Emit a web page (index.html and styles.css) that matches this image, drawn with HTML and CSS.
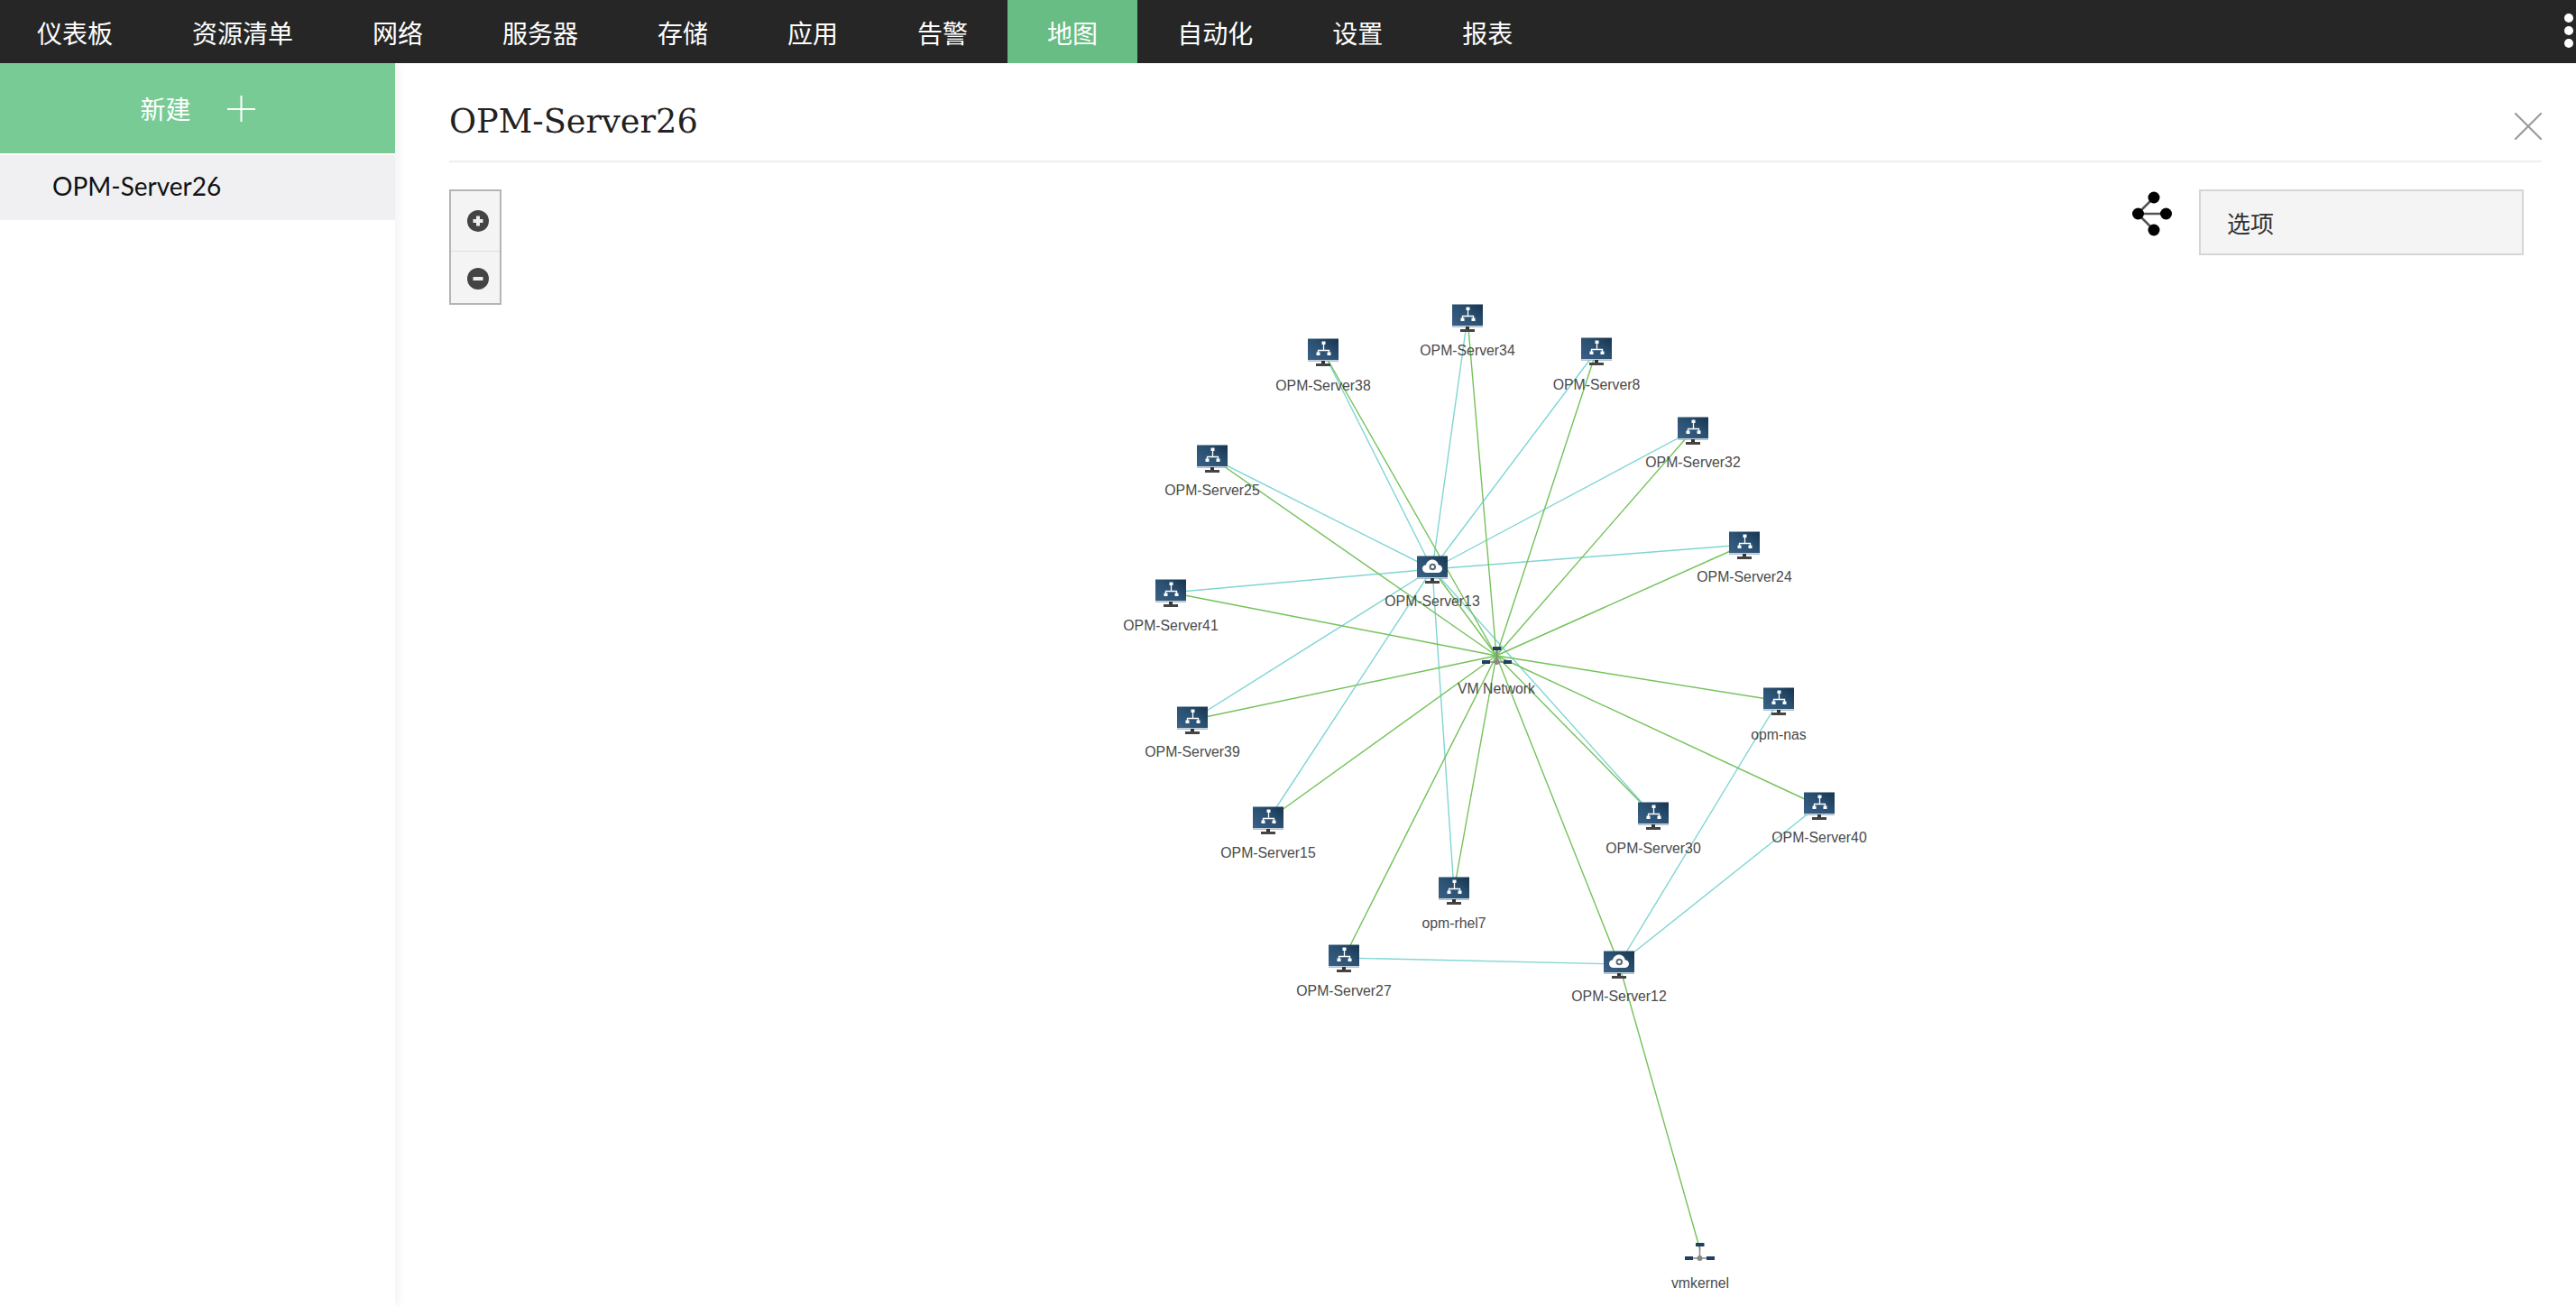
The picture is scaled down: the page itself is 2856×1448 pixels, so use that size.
FILE: index.html
```html
<!DOCTYPE html>
<html lang="zh">
<head>
<meta charset="utf-8">
<title>地图</title>
<link rel="stylesheet" href="styles.css">
</head>
<body>
<header class="topbar">
  <nav class="nav">
    <a class="nav-item">仪表板</a>
    <a class="nav-item">资源清单</a>
    <a class="nav-item">网络</a>
    <a class="nav-item">服务器</a>
    <a class="nav-item">存储</a>
    <a class="nav-item">应用</a>
    <a class="nav-item">告警</a>
    <a class="nav-item active">地图</a>
    <a class="nav-item">自动化</a>
    <a class="nav-item">设置</a>
    <a class="nav-item">报表</a>
  </nav>
  <div class="more"><i></i><i></i><i></i></div>
</header>
<div class="layout">
  <aside class="sidebar">
    <div class="new-btn">
      <span>新建</span>
      <svg class="plus" viewBox="0 0 31 29"><path d="M0 15h31M15.500 0v29"/></svg>
    </div>
    <div class="side-item">OPM-Server26</div>
  </aside>
  <main class="main">
    <svg class="map" viewBox="438 70 2418 1378" aria-label="map">
      <defs>
        <linearGradient id="scr" x1="0" y1="1" x2="1" y2="0">
          <stop offset="0" stop-color="#3a6288"/>
          <stop offset="0.550" stop-color="#2a5071"/>
          <stop offset="1" stop-color="#16344f"/>
        </linearGradient>
        <g id="monitor">
          <rect width="34" height="25" y="0.500" fill="url(#scr)"/>
          <rect width="34" height="1.500" y="24" fill="#c9d3dc"/>
          <rect x="15" y="25" width="4" height="3.500" fill="#333"/>
          <rect x="9" y="28" width="16" height="3" fill="#444"/>
        </g>
        <g id="srv">
          <use href="#monitor"/>
          <path d="M17.500 6v7.500M11.500 16v-2.500h12V16" fill="none" stroke="#fff" stroke-width="1.300"/>
          <rect x="15.500" y="3.500" width="4" height="3.500" fill="#fff"/>
          <rect x="9.500" y="15.500" width="4" height="3.500" fill="#fff"/>
          <rect x="21.500" y="15.500" width="4" height="3.500" fill="#fff"/>
        </g>
        <g id="cloud">
          <use href="#monitor"/>
          <path d="M11 19c-3 0-5-2-5-4.500 0-2.300 1.700-4 4-4.200C10.700 7 13.500 4.500 17 4.500c3.400 0 6 2.300 6.800 5.700 2.500.2 4.200 2 4.200 4.300 0 2.500-2 4.500-5 4.500z" fill="#fff"/>
          <circle cx="17.300" cy="12.500" r="2.800" fill="none" stroke="#5d6b78" stroke-width="2"/>
        </g>
        <g id="switch">
          <path d="M16.500 4v13M9 17h15" stroke="#888" stroke-width="1.500" fill="none"/>
          <rect x="12" y="0" width="9.500" height="4" fill="#1f3f63"/>
          <rect x="0" y="15" width="9" height="4" fill="#1f3f63"/>
          <rect x="24" y="15" width="9" height="4" fill="#1f3f63"/>
          <circle cx="16.500" cy="17" r="3" fill="#888"/>
        </g>
      </defs>

      <g class="teal">
        <line x1="1588" y1="631" x2="1467" y2="390"/>
        <line x1="1588" y1="631" x2="1627" y2="352"/>
        <line x1="1588" y1="631" x2="1770" y2="389"/>
        <line x1="1588" y1="631" x2="1877" y2="477"/>
        <line x1="1588" y1="631" x2="1344" y2="508"/>
        <line x1="1588" y1="631" x2="1934" y2="604"/>
        <line x1="1588" y1="631" x2="1298" y2="657"/>
        <line x1="1588" y1="631" x2="1322" y2="798"/>
        <line x1="1588" y1="631" x2="1406" y2="909"/>
        <line x1="1588" y1="631" x2="1612" y2="987"/>
        <line x1="1588" y1="631" x2="1833" y2="904"/>
        <line x1="1795" y1="1069" x2="1490" y2="1062"/>
        <line x1="1795" y1="1069" x2="1972" y2="777"/>
        <line x1="1795" y1="1069" x2="2016" y2="893"/>
      </g>
      <g class="green">
        <line x1="1659" y1="727" x2="1467" y2="390"/>
        <line x1="1659" y1="727" x2="1627" y2="352"/>
        <line x1="1659" y1="727" x2="1770" y2="389"/>
        <line x1="1659" y1="727" x2="1877" y2="477"/>
        <line x1="1659" y1="727" x2="1344" y2="508"/>
        <line x1="1659" y1="727" x2="1934" y2="604"/>
        <line x1="1659" y1="727" x2="1298" y2="657"/>
        <line x1="1659" y1="727" x2="1322" y2="798"/>
        <line x1="1659" y1="727" x2="1406" y2="909"/>
        <line x1="1659" y1="727" x2="1612" y2="987"/>
        <line x1="1659" y1="727" x2="1490" y2="1062"/>
        <line x1="1659" y1="727" x2="1795" y2="1069"/>
        <line x1="1659" y1="727" x2="1833" y2="904"/>
        <line x1="1659" y1="727" x2="2016" y2="893"/>
        <line x1="1659" y1="727" x2="1972" y2="777"/>
        <line x1="1659" y1="727" x2="1588" y2="631"/>
        <line x1="1795" y1="1069" x2="1885" y2="1386"/>
      </g>

      <use href="#srv" x="1610" y="337"/><text class="label" x="1627" y="394">OPM-Server34</text>
      <use href="#srv" x="1450" y="375"/><text class="label" x="1467" y="433">OPM-Server38</text>
      <use href="#srv" x="1753" y="374"/><text class="label" x="1770" y="432">OPM-Server8</text>
      <use href="#srv" x="1860" y="462"/><text class="label" x="1877" y="518">OPM-Server32</text>
      <use href="#srv" x="1327" y="493"/><text class="label" x="1344" y="549">OPM-Server25</text>
      <use href="#srv" x="1917" y="589"/><text class="label" x="1934" y="645">OPM-Server24</text>
      <use href="#cloud" x="1571" y="616"/><text class="label" x="1588" y="672">OPM-Server13</text>
      <use href="#srv" x="1281" y="642"/><text class="label" x="1298" y="699">OPM-Server41</text>
      <use href="#srv" x="1305" y="783"/><text class="label" x="1322" y="839">OPM-Server39</text>
      <use href="#srv" x="1389" y="894"/><text class="label" x="1406" y="951">OPM-Server15</text>
      <use href="#srv" x="1595" y="972"/><text class="label" x="1612" y="1029">opm-rhel7</text>
      <use href="#srv" x="1473" y="1047"/><text class="label" x="1490" y="1104">OPM-Server27</text>
      <use href="#cloud" x="1778" y="1054"/><text class="label" x="1795" y="1110">OPM-Server12</text>
      <use href="#srv" x="1816" y="889"/><text class="label" x="1833" y="946">OPM-Server30</text>
      <use href="#srv" x="2000" y="878"/><text class="label" x="2017" y="934">OPM-Server40</text>
      <use href="#srv" x="1955" y="762"/><text class="label" x="1972" y="820">opm-nas</text>
      <use href="#switch" x="1643" y="717"/><text class="label" x="1659" y="769">VM Network</text>
      <use href="#switch" x="1868" y="1378"/><text class="label" x="1885" y="1428">vmkernel</text>
    </svg>

    <div class="title-row">
      <h1 class="title">OPM-Server26</h1>
      <svg class="close" viewBox="0 0 30 30"><path d="M0 0l30 30M30 0L0 30"/></svg>
    </div>
    <div class="tools">
      <div class="zoom-ctl">
        <div class="zoom-btn"><svg viewBox="0 0 24 24"><circle cx="12" cy="12" r="12"/><path d="M12 6.500v11M6.500 12h11"/></svg></div>
        <div class="zoom-btn"><svg viewBox="0 0 24 24"><circle cx="12" cy="12" r="12"/><path d="M6.500 12h11"/></svg></div>
      </div>
      <div class="tools-right">
        <svg class="share" viewBox="0 0 44 50">
          <path d="M6 25L24 7M6 25h31M6 25l18 18"/>
          <circle cx="6.500" cy="25" r="6.500"/>
          <circle cx="24" cy="7" r="6.500"/>
          <circle cx="37.500" cy="25" r="6.500"/>
          <circle cx="24" cy="43" r="6.500"/>
        </svg>
        <div class="options">选项</div>
      </div>
    </div>
  </main>
</div>
</body>
</html>
```
FILE: styles.css
```css
* { box-sizing: border-box; }
html, body { margin: 0; height: 100%; overflow: hidden; background: #fff; }
body { font-family: "Noto Sans CJK SC", "Liberation Sans", sans-serif; color: #222; }

.topbar { height: 70px; background: #262626; display: flex; justify-content: space-between; }
.nav { display: flex; margin-left: -3px; }
.nav-item { padding: 0 44px; line-height: 72px; height: 70px; font-size: 28px; color: #fff; }
.nav-item.active { background: #68bd85; }
.more { width: 12px; margin-right: 1px; padding-top: 15px; display: flex; flex-direction: column; gap: 4px; }
.more i { width: 10px; height: 10px; border-radius: 50%; background: #fff; display: block; }

.layout { display: flex; height: 1378px; }
.sidebar { width: 438px; flex: none; background: #fff; box-shadow: 4px 0 10px rgba(0,0,0,.05); position: relative; z-index: 1; }
.new-btn { height: 100px; background: #79cb95; color: #fff; font-size: 28px; display: flex; align-items: center; justify-content: center; gap: 40px; margin-bottom: 2px; }
.plus { width: 31px; height: 29px; fill: none; stroke: #fff; stroke-width: 2; }
.side-item { height: 72px; background: #f0f0f2; padding-left: 58px; font-family: Lato, sans-serif; font-size: 28px; line-height: 69px; color: #111; }

.main { flex: 1; position: relative; padding: 0 38px 0 60px; }
.map { position: absolute; left: 0; top: 0; width: 2418px; height: 1378px; }
.teal line { stroke: #80d5d3; stroke-width: 1.400; }
.green line { stroke: #74c25a; stroke-width: 1.400; }
.label { font-family: "Liberation Sans", sans-serif; font-size: 15.800px; fill: #4a4a4a; text-anchor: middle; }

.title-row { height: 110px; border-bottom: 2px solid #eee; display: flex; justify-content: space-between; align-items: flex-start; position: relative; }
.title { margin: 41px 0 0; font-family: "DejaVu Serif", serif; font-weight: 400; font-size: 36.700px; line-height: 48px; color: #222; }
.close { width: 30px; height: 30px; margin-top: 55px; fill: none; stroke: #999; stroke-width: 2; }

.tools { display: flex; justify-content: space-between; align-items: flex-start; margin-top: 30px; padding-right: 20px; position: relative; }
.zoom-ctl { width: 58px; height: 128px; border: 2px solid #b5b5b5; background: #f4f4f4; }
.zoom-btn { height: 66px; display: flex; align-items: center; justify-content: center; padding-left: 6px; }
.zoom-btn + .zoom-btn { border-top: 1px solid #dedede; height: 60px; }
.zoom-btn svg { width: 24px; height: 24px; fill: #444; stroke: #eee; stroke-width: 4; }
.zoom-btn circle { stroke: none; }
.tools-right { display: flex; align-items: flex-start; gap: 30px; }
.share { width: 44px; height: 50px; margin-top: 2px; }
.share path { fill: none; stroke: #555; stroke-width: 2.500; }
.share circle { fill: #000; }
.options { width: 360px; height: 73px; border: 2px solid #d5d5d5; background: #f4f4f4; padding-left: 29px; font-size: 26px; line-height: 70px; color: #333; }
```
